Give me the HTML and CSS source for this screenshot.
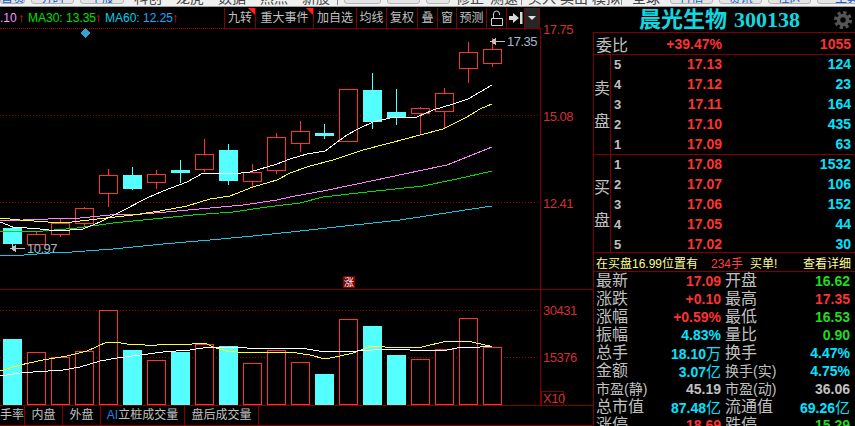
FILE: index.html
```html
<!DOCTYPE html>
<html lang="zh">
<head>
<meta charset="UTF-8">
<meta name="viewport" content="width=device-width, initial-scale=1.0">
<title>晨光生物 300138</title>
<link rel="stylesheet" href="styles.css">
</head>
<body>

<!-- top menu, only its lower edge is visible -->
<div class="strip">
  <div class="strip-in">
    <span class="tb w25">首页</span><span class="tb w43">分时</span><span class="tb w44">个股</span>
    <span class="wd">科创</span><span class="wd">龙虎</span><span class="wd">数据</span><span class="wd">热点</span><span class="wd">新股</span>
    <i class="bar"></i>
    <span class="tb w37"></span><span class="tb w33"></span><span class="tb w24"><b class="dot"></b></span>
    <span class="wd w28">修正</span><span class="wd w28">测速</span>
    <i class="bar"></i>
    <span class="wd w26">买入</span><span class="wd w26">卖出</span><span class="wd w26">模拟</span>
    <i class="bar"></i>
    <span class="wd">全球</span>
    <span class="tb w43">行情</span><span class="tb w43">资讯</span><span class="tb w43">社区</span><span class="tb w60">工具</span>
  </div>
</div>

<div class="app">
  <div class="left">
    <div class="head">
      <div class="legend">
        <span class="ma20">.10</span><span class="arr">↑</span>
        <span class="ma30">MA30: 13.35</span><span class="arr">↑</span>
        <span class="ma60">MA60: <em>12.25</em></span><span class="arr">↑</span>
      </div>
      <div class="tools">
        <button class="tool w31 flag">九转</button>
        <button class="tool w58 flag">重大事件</button>
        <button class="tool w43">加自选</button>
        <button class="tool w30">均线</button>
        <button class="tool w31">复权</button>
        <button class="tool w20">叠</button>
        <button class="tool w19">窗</button>
        <button class="tool w30">预测</button>
        <button class="tool w20">
          <svg width="14" height="17" viewBox="0 0 14 17"><path class="ico" d="M1.5 8.5h11v7h-11zM3.5 8.5V4a3 3 0 0 1 6 0V5"/></svg>
        </button>
        <button class="tool w18">
          <svg width="14" height="12" viewBox="0 0 14 12"><path class="ico-f" d="M0 4h4V1l6 5-6 5V8H0zM11 0h2.500v12H11z"/></svg>
        </button>
        <button class="tool w15 drop"><i class="tri"></i></button>
      </div>
    </div>

    <svg class="chart" width="593" height="377" viewBox="0 29 593 377">
      <path class="grid-dot" d="M0 115.500H540M0 202.500H540M0 310.500H540M0 357.500H540"/>
      <path class="grid" d="M0 289.500H593M0 405.500H593M540.500 29V405"/>

      <polygon class="mark" points="85,28 90,33 85,38 80,33"/>

      <!-- candles -->
      <path class="wick-r" d="M36.500 232V234M60.500 218V223M60.500 234V237M84.500 207V208M84.500 223V226M108.500 169V175M108.500 193V207M156.500 170V174M156.500 182V189M204.500 139V154M204.500 169V172M252.500 164V172M252.500 181V187M276.500 133V137M276.500 170V174M300.500 121V131M300.500 143V152M420.500 107V108M420.500 113V135M444.500 88V93M444.500 111V129M468.500 42V52M468.500 68V83M492.500 38V49M492.500 63V67"/>
      <path class="wick-c" d="M12.500 226V249M132.500 167V190M180.500 160V183M228.500 144V185M324.500 124V139M372.500 73V129M396.500 89V125"/>
      <g class="up">
        <rect x="27.500" y="234.500" width="18" height="10"/>
        <rect x="51.500" y="223.500" width="18" height="11"/>
        <rect x="75.500" y="208.500" width="18" height="15"/>
        <rect x="99.500" y="175.500" width="18" height="18"/>
        <rect x="147.500" y="174.500" width="18" height="8"/>
        <rect x="195.500" y="154.500" width="18" height="15"/>
        <rect x="243.500" y="172.500" width="18" height="9"/>
        <rect x="267.500" y="137.500" width="18" height="33"/>
        <rect x="291.500" y="131.500" width="18" height="12"/>
        <rect x="339.500" y="89.500" width="18" height="52"/>
        <rect x="411.500" y="108.500" width="18" height="5"/>
        <rect x="435.500" y="93.500" width="18" height="18"/>
        <rect x="459.500" y="52.500" width="18" height="16"/>
        <rect x="483.500" y="49.500" width="18" height="14"/>
      </g>
      <g class="down">
        <rect x="3" y="228" width="19" height="16"/>
        <rect x="123" y="175" width="19" height="14"/>
        <rect x="171" y="170" width="19" height="3"/>
        <rect x="219" y="150" width="19" height="31"/>
        <rect x="315" y="133" width="19" height="3"/>
        <rect x="363" y="90" width="19" height="32"/>
        <rect x="387" y="112" width="19" height="6"/>
      </g>

      <!-- moving averages -->
      <polyline class="l-blue" points="0,256 24,255 50,253 72,252 113,249 163,244 210,240 253,236 300,231 400,220 472,209 492,206"/>
      <polyline class="l-green" points="0,231 43,231 77,228 113,223 153,219 193,215 233,212 267,207 300,203 323,197 367,192 423,186 457,179 492,171"/>
      <polyline class="l-pink" points="0,221 23,220 48,219 80,218 110,215 143,214 177,211 210,208 243,205 277,200 290,197 323,191 357,184 390,177 423,170 447,165 467,157 492,147"/>
      <polyline class="l-yellow" points="0,218 20,220 48,222 72,222 97,219 133,215 160,211 187,206 210,199 230,196 253,187 277,180 290,173 310,166 333,160 363,150 390,143 420,135 443,129 467,117 480,109 492,104"/>
      <polyline class="l-white" points="0,222 13,227 40,229 57,231 83,229 100,222 120,212 147,198 163,191 187,182 203,173 232,174 250,172 277,164 290,159 307,154 325,151 340,140 347,135 358,129 373,122 390,118 417,117 433,110 453,104 468,99 480,92 492,85"/>

      <!-- high / low tags -->
      <path class="tag-line" d="M493 41.500H505M12 248.500H25"/>
      <path class="tag-head" d="M490 41.500l6-4v8zM10 248.500l6-4v8z"/>
      <text class="tag" x="507" y="46">17.35</text>
      <text class="tag" x="27" y="253">10.97</text>

      <rect class="zhang" x="343" y="276" width="12" height="12"/>
      <text class="zhang-t" x="349" y="286">涨</text>

      <!-- volume -->
      <g class="down">
        <rect x="3" y="339" width="19" height="66"/>
        <rect x="123" y="350" width="19" height="55"/>
        <rect x="171" y="352" width="19" height="53"/>
        <rect x="219" y="346" width="19" height="59"/>
        <rect x="315" y="374" width="19" height="31"/>
        <rect x="363" y="326" width="19" height="79"/>
        <rect x="387" y="355" width="19" height="50"/>
      </g>
      <g class="up">
        <rect x="27.500" y="352.500" width="18" height="52"/>
        <rect x="51.500" y="357.500" width="18" height="47"/>
        <rect x="75.500" y="351.500" width="18" height="53"/>
        <rect x="99.500" y="310.500" width="18" height="94"/>
        <rect x="147.500" y="360.500" width="18" height="44"/>
        <rect x="195.500" y="344.500" width="18" height="60"/>
        <rect x="243.500" y="363.500" width="18" height="41"/>
        <rect x="267.500" y="350.500" width="18" height="54"/>
        <rect x="291.500" y="362.500" width="18" height="42"/>
        <rect x="339.500" y="319.500" width="18" height="85"/>
        <rect x="411.500" y="359.500" width="18" height="45"/>
        <rect x="435.500" y="349.500" width="18" height="55"/>
        <rect x="459.500" y="318.500" width="18" height="86"/>
        <rect x="483.500" y="347.500" width="18" height="57"/>
      </g>
      <polyline class="l-yellow" points="0,371 20,365 43,360 67,356 87,351 107,342 115,342 127,344 145,345 157,345 168,344 192,344 205,343 213,347 227,351 247,353 260,352 287,352 290,352 310,355 325,359 340,356 353,353 372,346 385,347 422,347 443,342 467,341 490,346"/>
      <polyline class="l-white" points="0,376 20,373 33,372 63,370 80,367 100,361 117,358 140,355 163,352 190,350 203,348 233,347 247,348 287,348 307,349 319,351 337,352 357,351 372,350 385,349 410,350 447,350 457,348 465,347 480,347 492,346"/>

      <!-- axis -->
      <text class="ax" x="543" y="34">17.75</text>
      <text class="ax" x="543" y="121">15.08</text>
      <text class="ax" x="543" y="208">12.41</text>
      <text class="ax" x="543" y="315">30431</text>
      <text class="ax" x="543" y="362">15376</text>
      <rect class="x10" x="541.500" y="391.500" width="22" height="14"/>
      <text class="ax" x="543" y="403">X10</text>
    </svg>

    <div class="tabs">
      <span class="tab t24">手率</span>
      <span class="tab t38">内盘</span>
      <span class="tab t38">外盘</span>
      <span class="tab t84"><b class="ai">AI</b>立桩成交量</span>
      <span class="tab t74">盘后成交量</span>
    </div>
  </div>

  <aside class="panel">
    <div class="title">
      <span class="name">晨光生物</span><span class="code">300138</span>
      <svg class="gear" width="18" height="18" viewBox="0 0 18 18">
        <circle class="gear-t" cx="9" cy="9" r="7"/>
        <circle class="gear-b" cx="9" cy="9" r="4.500"/>
      </svg>
    </div>

    <div class="ratio">
      <span class="lbl">委比</span>
      <span class="price r">+39.47%</span>
      <span class="vol r">1055</span>
    </div>

    <div class="book sell">
      <div class="side"><span>卖</span><span>盘</span></div>
      <div class="rows">
        <div class="row"><span class="no">5</span><span class="price r">17.13</span><span class="vol c">124</span></div>
        <div class="row"><span class="no">4</span><span class="price r">17.12</span><span class="vol c">23</span></div>
        <div class="row"><span class="no">3</span><span class="price r">17.11</span><span class="vol c">164</span></div>
        <div class="row"><span class="no">2</span><span class="price r">17.10</span><span class="vol c">435</span></div>
        <div class="row"><span class="no">1</span><span class="price r">17.09</span><span class="vol c">63</span></div>
      </div>
    </div>

    <div class="book buy">
      <div class="side"><span>买</span><span>盘</span></div>
      <div class="rows">
        <div class="row"><span class="no">1</span><span class="price r">17.08</span><span class="vol c">1532</span></div>
        <div class="row"><span class="no">2</span><span class="price r">17.07</span><span class="vol c">106</span></div>
        <div class="row"><span class="no">3</span><span class="price r">17.06</span><span class="vol c">152</span></div>
        <div class="row"><span class="no">4</span><span class="price r">17.05</span><span class="vol c">44</span></div>
        <div class="row"><span class="no">5</span><span class="price r">17.02</span><span class="vol c">30</span></div>
      </div>
    </div>

    <div class="note">
      <span class="n1">在买盘16.99位置有</span>
      <span class="n2">234手</span>
      <span class="n3">买单!</span>
      <span class="n4">查看详细</span>
    </div>

    <div class="stats">
      <div class="st"><span>最新</span><b class="r">17.09</b></div>
      <div class="st"><span>开盘</span><b class="g">16.62</b></div>
      <div class="st"><span>涨跌</span><b class="r">+0.10</b></div>
      <div class="st"><span>最高</span><b class="r">17.35</b></div>
      <div class="st"><span>涨幅</span><b class="r">+0.59%</b></div>
      <div class="st"><span>最低</span><b class="g">16.53</b></div>
      <div class="st"><span>振幅</span><b class="c">4.83%</b></div>
      <div class="st"><span>量比</span><b class="g">0.90</b></div>
      <div class="st"><span>总手</span><b class="c">18.10<u>万</u></b></div>
      <div class="st"><span>换手</span><b class="c">4.47%</b></div>
      <div class="st"><span>金额</span><b class="c">3.07<u>亿</u></b></div>
      <div class="st"><span class="sm">换手(实)</span><b class="c">4.75%</b></div>
      <div class="st"><span class="sm">市盈(静)</span><b class="w">45.19</b></div>
      <div class="st"><span class="sm">市盈(动)</span><b class="w">36.06</b></div>
      <div class="st"><span>总市值</span><b class="c">87.48<u>亿</u></b></div>
      <div class="st"><span>流通值</span><b class="c">69.26<u>亿</u></b></div>
      <div class="st"><span>涨停</span><b class="r">18.69</b></div>
      <div class="st"><span>跌停</span><b class="g">15.29</b></div>
    </div>
  </aside>
</div>

</body>
</html>
```

FILE: styles.css
```css
:root {
  --line: #800000;
  --red: #ff3232;
  --cyan: #00e4ff;
  --green: #1edc1e;
  --text: #c0c0c0;
  --cjk: "Liberation Sans", "Noto Sans CJK SC", sans-serif;
}
html, body { margin: 0; height: 426px; overflow: hidden; background: #000; }
body { font-family: var(--cjk); color: var(--text); }

/* top strip */
.strip { height: 6px; background: #f0f0f0; border-bottom: 1px solid #a0a0a0; overflow: hidden; }
.strip-in { display: flex; gap: 6px; align-items: flex-start; margin-top: -12px; white-space: nowrap; }
.tb { height: 16px; box-sizing: border-box; border: 1px solid #b4b4b4; border-radius: 3px; background: #e4e4e4; color: #1060d0; font-size: 12px; line-height: 21px; text-align: center; flex: none; overflow: hidden; }
.wd { width: 36px; flex: none; height: 20px; line-height: 20px; color: #444; font-size: 14px; text-align: center; }
.w25 { width: 25px; } .w43 { width: 43px; } .w44 { width: 44px; } .w37 { width: 37px; } .w33 { width: 33px; } .w24 { width: 24px; }
.wd.w28 { width: 28px; } .wd.w26 { width: 26px; } .w60 { width: 60px; }
.bar { width: 1px; height: 17px; background: #888; margin-left: -3px; flex: none; }
.dot { display: block; width: 8px; height: 8px; background: #e09020; border-radius: 50%; margin: 2px auto 0; }

.app { display: flex; height: 419px; }
.left { width: 593px; flex: none; }

/* legend + tool buttons */
.head { display: flex; height: 22px; width: 541px; }
.legend { width: 224px; flex: none; box-sizing: border-box; border-bottom: 1px dotted #b00000; font-size: 12px; line-height: 22px; white-space: nowrap; overflow: hidden; display: flex; }
.legend em { font-style: normal; color: #18a8ff; }
.ma20 { color: #ff90ff; width: 18px; }
.ma30 { color: #00e000; width: 67px; }
.ma60 { color: #00d0e8; width: 67px; }
.arr { color: #e02020; width: 10px; font-size: 13px; }
.tools { display: flex; flex: 1; border-bottom: 1px solid var(--line); margin-top: 1px; border-left: 1px solid var(--line); }
.tool { box-sizing: border-box; padding: 0; background: #000; color: var(--text); border: 0; border-right: 1px solid var(--line); font: 12px/20px var(--cjk); position: relative; display: flex; align-items: center; justify-content: center; white-space: nowrap; }
.w31 { width: 31px; } .w58 { width: 58px; } .w30 { width: 30px; } .w20 { width: 20px; } .w19 { width: 19px; } .w18 { width: 18px; } .w15 { width: 15px; }
.flag::after { content: ""; position: absolute; top: 0; right: 0; border-top: 7px solid #ff2020; border-left: 7px solid transparent; }
.ico { fill: none; stroke: #d0d0d0; }
.ico-f { fill: #d8d8d8; }
.drop { background: #262626; }
.tri { border-top: 4px solid #e0e0e0; border-left: 4px solid transparent; border-right: 4px solid transparent; }

/* chart */
.chart { display: block; overflow: visible; shape-rendering: crispEdges; }
.grid { fill: none; stroke: var(--line); }
.grid-dot { fill: none; stroke: #a00000; stroke-dasharray: 1 2; }
.mark { fill: #36a0d0; }
.up rect { fill: #000; stroke: var(--red); }
.down rect { fill: #54ffff; }
.wick-r { fill: none; stroke: var(--red); }
.wick-c { fill: none; stroke: #54ffff; }
polyline { fill: none; stroke-width: 1; }
.l-white { stroke: #fff; }
.l-yellow { stroke: #ffff20; }
.l-pink { stroke: #ff80ff; }
.l-green { stroke: #00e000; }
.l-blue { stroke: #10c8e8; }
.tag-line { stroke: #c0c0c0; fill: none; }
.tag-head { fill: #c0c0c0; }
.tag { fill: #a8b8c8; font: 13px "Liberation Sans", sans-serif; letter-spacing: -.5px; }
.ax { fill: #d03030; font: 13px "Liberation Sans", sans-serif; letter-spacing: -.5px; }
.x10 { fill: none; stroke: var(--line); }
.zhang { fill: #800000; }
.zhang-t { fill: #f0f0f0; font: 10px "Noto Sans CJK SC", sans-serif; text-anchor: middle; }

/* bottom tabs */
.tabs { display: flex; height: 20px; box-sizing: border-box; border-bottom: 1px solid var(--line); font-size: 12px; line-height: 19px; }
.tab { box-sizing: border-box; border-right: 1px solid var(--line); text-align: center; white-space: nowrap; overflow: hidden; }
.t24 { width: 25px; text-align: right; direction: rtl; }
.t38 { width: 38px; } .t84 { width: 84px; } .t74 { width: 74px; }
.ai { color: #2a80e0; font-weight: 400; }

/* right panel */
.panel { width: 262px; flex: none; }
.title { height: 25px; display: flex; align-items: center; padding-left: 46px; color: #10d8e0; font-weight: 700; }
.name { font-size: 22px; line-height: 25px; }
.code { font: 700 22px "Liberation Serif", serif; margin-left: 7px; }
.gear { margin-left: auto; margin-right: 3px; }
.gear-t { fill: none; stroke: #555; stroke-width: 4; stroke-dasharray: 3 2.500; }
.gear-b { fill: none; stroke: #555; stroke-width: 3.500; }
.ratio, .book, .note, .stats { border-left: 1px solid var(--line); }
.ratio { height: 21px; border-top: 1px solid var(--line); border-bottom: 1px solid var(--line); display: flex; align-items: center; padding-left: 2px; padding-right: 4px; }
.lbl { font-size: 16px; width: 33px; }
.price { font: 700 14px "Liberation Sans", sans-serif; width: 93px; text-align: right; flex: none; letter-spacing: 0; }
.vol { font: 700 14px "Liberation Sans", sans-serif; margin-left: auto; }
.r { color: var(--red); }
.c { color: var(--cyan); }
.g { color: var(--green); }
.w { color: var(--text); }
.book { display: flex; box-sizing: border-box; border-bottom: 1px solid var(--line); }
.sell { height: 100px; }
.buy { height: 98px; }
.side { width: 17px; flex: none; box-sizing: border-box; border-right: 1px solid var(--line); display: flex; flex-direction: column; align-items: center; justify-content: center; font-size: 16px; line-height: 33px; }
.rows { flex: 1; margin-top: -1px; padding: 0 4px 0 3px; }
.row { display: flex; height: 20px; align-items: center; }
.no { font: 700 13px "Liberation Sans", sans-serif; width: 17px; flex: none; }
.row .price { width: 91px; }
.note { height: 19px; box-sizing: border-box; border-bottom: 1px solid var(--line); display: flex; align-items: center; padding-left: 2px; padding-right: 4px; font-size: 12px; color: #ffff90; white-space: nowrap; }
.n1 { width: 115px; }
.n2 { width: 39px; color: #ff4040; }
.n3 { width: 53px; }
.stats { display: grid; grid-template-columns: 125px 125px; column-gap: 4px; grid-auto-rows: 18px; padding-left: 2px; }
.st { display: flex; justify-content: space-between; align-items: center; font-size: 16px; line-height: 18px; white-space: nowrap; }
.st .sm { font-size: 14px; }
.st b { font: 700 14px/18px "Liberation Sans", "Noto Sans CJK SC", sans-serif; }
.st u { text-decoration: none; font-weight: 400; font-size: 15px; line-height: 18px; font-family: "Noto Sans CJK SC", sans-serif; }
```
